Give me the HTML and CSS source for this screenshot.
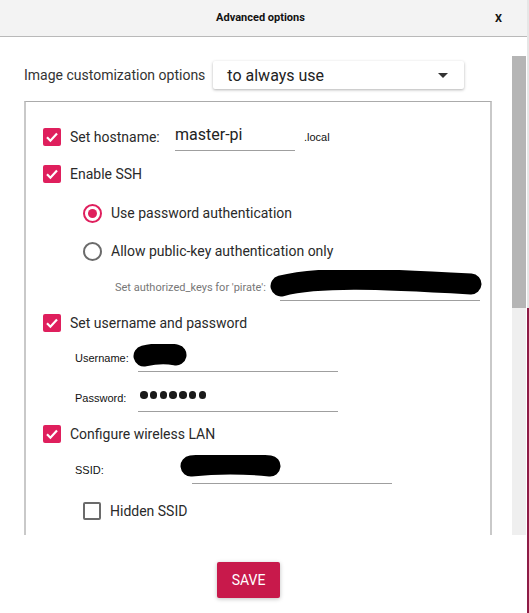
FILE: index.html
```html
<!DOCTYPE html>
<html lang="en">
<head>
<meta charset="utf-8">
<title>Advanced options</title>
<link rel="stylesheet" href="styles.css">
</head>
<body>
<div class="window">
  <header class="titlebar">
    <span></span>
    <h1 class="title">Advanced options</h1>
    <span class="close">X</span>
  </header>
  <div class="main">
    <div class="scroll">
      <div class="top-row">
        <span class="top-label">Image customization options</span>
        <div class="select">
          <span>to always use</span>
          <svg class="caret" width="10" height="5" viewBox="0 0 10 5"><path d="M0 0H10L5 5Z" fill="#333"/></svg>
        </div>
      </div>
      <div class="group">
        <div class="row">
          <span class="check on"><svg width="18" height="18" viewBox="0 0 18 18"><path d="M4 9.3l3.4 3.4L14 5.6" fill="none" stroke="#fff" stroke-width="2.2"/></svg></span>
          <span class="label host-label">Set hostname:</span>
          <span class="field host-field"><span class="value">master-pi</span></span>
          <span class="suffix">.local</span>
        </div>
        <div class="row gap9">
          <span class="check on"><svg width="18" height="18" viewBox="0 0 18 18"><path d="M4 9.3l3.4 3.4L14 5.6" fill="none" stroke="#fff" stroke-width="2.2"/></svg></span>
          <span class="label">Enable SSH</span>
        </div>
        <div class="row sub gap11">
          <span class="radio on"></span>
          <span class="label">Use password authentication</span>
        </div>
        <div class="row sub gap10">
          <span class="radio"></span>
          <span class="label">Allow public-key authentication only</span>
        </div>
        <div class="row keys gap8">
          <span class="hint">Set authorized_keys for 'pirate':</span>
          <span class="field key-field">
            <svg class="redact redact-key" width="212" height="27" viewBox="0 0 212 27"><path d="M11 16C50 6 110 9 201 14" fill="none" stroke="#000" stroke-width="21" stroke-linecap="round"/></svg>
          </span>
        </div>
        <div class="row gap8">
          <span class="check on"><svg width="18" height="18" viewBox="0 0 18 18"><path d="M4 9.3l3.4 3.4L14 5.6" fill="none" stroke="#fff" stroke-width="2.2"/></svg></span>
          <span class="label">Set username and password</span>
        </div>
        <div class="row cred gap7">
          <span class="small-label">Username:</span>
          <span class="field cred-field">
            <svg class="redact redact-user" width="54" height="23" viewBox="0 0 54 23"><path d="M11 12C24 9 34 9 43 11" fill="none" stroke="#000" stroke-width="21" stroke-linecap="round"/></svg>
          </span>
        </div>
        <div class="row cred gap12">
          <span class="small-label">Password:</span>
          <span class="field cred-field">
            <span class="dots"><i></i><i></i><i></i><i></i><i></i><i></i><i></i></span>
          </span>
        </div>
        <div class="row gap8">
          <span class="check on"><svg width="18" height="18" viewBox="0 0 18 18"><path d="M4 9.3l3.4 3.4L14 5.6" fill="none" stroke="#fff" stroke-width="2.2"/></svg></span>
          <span class="label">Configure wireless LAN</span>
        </div>
        <div class="row cred gap8">
          <span class="small-label ssid-label">SSID:</span>
          <span class="field cred-field">
            <svg class="redact redact-ssid" width="101" height="22" viewBox="0 0 101 22"><path d="M11 11C40 8 70 9 90 11" fill="none" stroke="#000" stroke-width="21" stroke-linecap="round"/></svg>
          </span>
        </div>
        <div class="row sub gap13">
          <span class="check off"></span>
          <span class="label">Hidden SSID</span>
        </div>
        <div class="spacer"></div>
      </div>
    </div>
    <div class="scrollbar"><div class="thumb"></div></div>
  </div>
  <footer class="footer">
    <button class="save">SAVE</button>
  </footer>
</div>
<div class="edge"></div>
</body>
</html>
```

FILE: styles.css
```css
* { box-sizing: border-box; }
html, body { margin: 0; padding: 0; }
body {
  display: flex;
  width: 529px;
  height: 613px;
  overflow: hidden;
  background: #fff;
  font-family: Roboto, "Noto Sans", sans-serif;
  color: #222;
}
.window {
  width: 527px;
  height: 613px;
  display: flex;
  flex-direction: column;
}
.edge {
  width: 2px;
  background: linear-gradient(#e6e6e6 0 308px, #8e1c46 308px);
}
.titlebar {
  height: 37px;
  flex: none;
  background: #f3f3f3;
  border-bottom: 1px solid #b9b9b9;
  display: grid;
  grid-template-columns: 1fr auto 1fr;
  align-items: center;
}
.title {
  margin: 0 0 1px 0;
  font-family: Roboto, sans-serif;
  font-weight: 700;
  font-size: 11px;
  color: #111;
  padding-right: 6px;
}
.close {
  justify-self: end;
  padding-right: 25px;
  font-family: Roboto, sans-serif;
  font-weight: 700;
  font-size: 11px;
  color: #111;
}
.main {
  height: 498px;
  flex: none;
  display: flex;
  overflow: hidden;
}
.scroll {
  flex: 1;
  overflow: hidden;
}
.scrollbar {
  width: 14px;
  margin: 19px 1px 0 0;
  background: #efefef;
}
.thumb {
  height: 252px;
  background: #b5b5b5;
}
.top-row {
  display: flex;
  align-items: center;
  padding: 24px 0 0 24px;
  height: 52px;
}
.top-label {
  font-size: 14px;
  color: #333;
  margin-right: 8px;
}
.select {
  width: 251px;
  height: 28px;
  display: flex;
  align-items: center;
  justify-content: space-between;
  padding: 0 16px 0 14px;
  background: #fff;
  border-radius: 2px;
  box-shadow: 0 1px 3px rgba(0,0,0,0.3);
  font-size: 16px;
  color: #222;
}
.caret { display: block; }
.group {
  margin: 12px 0 0 24px;
  width: 468px;
  border: 1px solid #ababab;
  border-left: 2px solid #c9c9c9;
  border-right: 2px solid #c9c9c9;
  padding: 21px 0 0 17px;
  display: flex;
  flex-direction: column;
}
.spacer { height: 40px; flex: none; }
.row {
  height: 28px;
  display: flex;
  align-items: center;
  flex: none;
}
.gap7 { margin-top: 7px; }
.gap8 { margin-top: 8px; }
.gap9 { margin-top: 9px; }
.gap10 { margin-top: 10px; }
.gap11 { margin-top: 11px; }
.gap12 { margin-top: 12px; }
.gap13 { margin-top: 13px; }
.sub { padding-left: 40px; }
.keys { padding-left: 72px; }
.cred { padding-left: 32px; }
.check {
  width: 18px;
  height: 18px;
  border-radius: 2px;
  flex: none;
  margin-right: 9px;
  display: block;
}
.check svg { display: block; }
.check.on { background: #df1f5d; }
.check.off {
  border: 2px solid #6b6b6b;
  margin-right: 9px;
}
.radio {
  width: 19px;
  height: 19px;
  border-radius: 50%;
  border: 2px solid #6b6b6b;
  flex: none;
  margin-right: 9px;
  display: flex;
  align-items: center;
  justify-content: center;
}
.radio.on { border-color: #df1f5d; }
.radio.on::after {
  content: "";
  width: 9px;
  height: 9px;
  border-radius: 50%;
  background: #df1f5d;
}
.label {
  font-size: 14px;
  color: #2a2a2a;
}
.host-label { width: 105px; }
.field {
  position: relative;
  align-self: stretch;
  border-bottom: 1px solid #9f9f9f;
  display: flex;
}
.host-field { width: 120px; }
.value {
  font-size: 16px;
  color: #222;
  margin-top: 2px;
}
.suffix {
  font-family: "Liberation Sans", Arial, sans-serif;
  font-size: 11px;
  color: #111;
  margin-left: 9px;
}
.hint {
  font-size: 11px;
  color: #777;
  width: 165px;
}
.key-field { width: 200px; }
.small-label {
  font-family: "Liberation Sans", Arial, sans-serif;
  font-size: 11px;
  color: #111;
  width: 63px;
}
.ssid-label { width: 117px; }
.cred-field { width: 200px; }
.redact { position: absolute; display: block; }
.redact-key { left: -10px; top: -3px; }
.redact-user { left: -5px; top: 0; }
.redact-ssid { left: -12px; top: -1px; }
.dots {
  display: flex;
  gap: 2.3px;
  margin: 7px 0 0 2px;
}
.dots i {
  width: 7.5px;
  height: 7.5px;
  border-radius: 50%;
  background: #1a1a1a;
}
.footer {
  flex: 1;
  padding: 27px 0 0 217px;
}
.save {
  width: 63px;
  height: 36px;
  border: none;
  border-radius: 2px;
  background: #c8194b;
  color: #fff;
  font-family: Roboto, sans-serif;
  font-size: 14px;
  box-shadow: 0 1px 4px rgba(0,0,0,0.25);
  padding: 0;
}
```
